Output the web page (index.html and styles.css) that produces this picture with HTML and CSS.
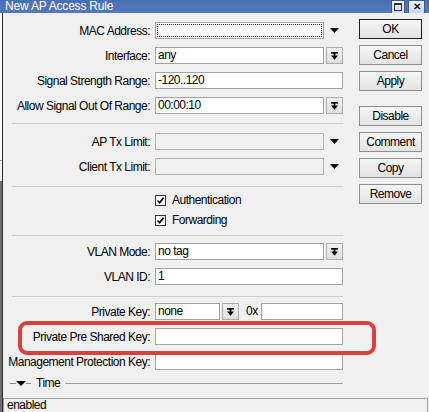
FILE: index.html
```html
<!DOCTYPE html>
<html>
<head>
  <meta charset="utf-8">
  <title>New AP Access Rule</title>
  <link rel="stylesheet" href="styles.css">
</head>
<body>
  <div class="titlebar">
    <span class="title">New AP Access Rule</span>
    <div class="winbtns">
      <span class="wb"><span class="max-box"></span></span>
      <span class="wb close">✕</span>
    </div>
  </div>

  <div class="frame">
    <div class="content">
      <div class="form">

        <div class="section s1">
          <div class="row">
            <span class="lbl">MAC Address:</span>
            <div class="ctl"><span class="input short focus"><span class="focus-rect"></span></span><span class="arrow"><svg width="9" height="5" viewBox="0 0 9 5"><polygon points="0,0 9,0 4.5,5" fill="#000"/></svg></span></div>
          </div>
          <div class="row">
            <span class="lbl">Interface:</span>
            <div class="ctl"><span class="input short">any</span><span class="dropbtn"><svg width="7" height="8" viewBox="0 0 7 8"><rect x="0" y="0" width="7" height="1.6" fill="#000"/><rect x="2.6" y="1" width="1.8" height="3" fill="#000"/><polygon points="0,3.4 7,3.4 3.5,7.8" fill="#000"/></svg></span></div>
          </div>
          <div class="row">
            <span class="lbl">Signal Strength Range:</span>
            <div class="ctl"><span class="input">-120..120</span></div>
          </div>
          <div class="row">
            <span class="lbl">Allow Signal Out Of Range:</span>
            <div class="ctl"><span class="input short">00:00:10</span><span class="dropbtn"><svg width="7" height="8" viewBox="0 0 7 8"><rect x="0" y="0" width="7" height="1.6" fill="#000"/><rect x="2.6" y="1" width="1.8" height="3" fill="#000"/><polygon points="0,3.4 7,3.4 3.5,7.8" fill="#000"/></svg></span></div>
          </div>
        </div>

        <div class="sep sep-a"></div>

        <div class="section s2">
          <div class="row">
            <span class="lbl">AP Tx Limit:</span>
            <div class="ctl"><span class="input short disabled"></span><span class="arrow"><svg width="9" height="5" viewBox="0 0 9 5"><polygon points="0,0 9,0 4.5,5" fill="#000"/></svg></span></div>
          </div>
          <div class="row">
            <span class="lbl">Client Tx Limit:</span>
            <div class="ctl"><span class="input short disabled"></span><span class="arrow"><svg width="9" height="5" viewBox="0 0 9 5"><polygon points="0,0 9,0 4.5,5" fill="#000"/></svg></span></div>
          </div>
        </div>

        <div class="sep sep-b"></div>

        <div class="section s3">
          <div class="check-row">
            <span class="cb"><svg width="9" height="9" viewBox="0 0 9 9"><path d="M1.5 4.5 L3.6 6.8 L7.6 1.8" fill="none" stroke="#000" stroke-width="1.7"/></svg></span>
            <span>Authentication</span>
          </div>
          <div class="check-row">
            <span class="cb"><svg width="9" height="9" viewBox="0 0 9 9"><path d="M1.5 4.5 L3.6 6.8 L7.6 1.8" fill="none" stroke="#000" stroke-width="1.7"/></svg></span>
            <span>Forwarding</span>
          </div>
        </div>

        <div class="sep sep-c"></div>

        <div class="section s4">
          <div class="row">
            <span class="lbl">VLAN Mode:</span>
            <div class="ctl"><span class="input short">no tag</span><span class="dropbtn"><svg width="7" height="8" viewBox="0 0 7 8"><rect x="0" y="0" width="7" height="1.6" fill="#000"/><rect x="2.6" y="1" width="1.8" height="3" fill="#000"/><polygon points="0,3.4 7,3.4 3.5,7.8" fill="#000"/></svg></span></div>
          </div>
          <div class="row">
            <span class="lbl">VLAN ID:</span>
            <div class="ctl"><span class="input">1</span></div>
          </div>
        </div>

        <div class="sep sep-b"></div>

        <div class="section s5">
          <div class="row">
            <span class="lbl">Private Key:</span>
            <div class="ctl">
              <span class="input key">none</span>
              <span class="dropbtn"><svg width="7" height="8" viewBox="0 0 7 8"><rect x="0" y="0" width="7" height="1.6" fill="#000"/><rect x="2.6" y="1" width="1.8" height="3" fill="#000"/><polygon points="0,3.4 7,3.4 3.5,7.8" fill="#000"/></svg></span>
              <span class="hex">0x</span>
              <span class="input"></span>
            </div>
          </div>
          <div class="row">
            <span class="lbl">Private Pre Shared Key:</span>
            <div class="ctl"><span class="input"></span></div>
          </div>
          <div class="row">
            <span class="lbl">Management Protection Key:</span>
            <div class="ctl"><span class="input"></span></div>
          </div>
        </div>

        <div class="timegroup">
          <span class="tick"></span>
          <svg width="10" height="5" viewBox="0 0 10 5"><polygon points="0,0 10,0 5,5" fill="#000"/></svg>
          <span class="tick short-tick"></span>
          <span class="time-label">Time</span>
          <span class="time-line"></span>
        </div>
      </div>

      <div class="buttons">
        <button class="btn default">OK</button>
        <button class="btn">Cancel</button>
        <button class="btn">Apply</button>
        <button class="btn gap">Disable</button>
        <button class="btn">Comment</button>
        <button class="btn">Copy</button>
        <button class="btn">Remove</button>
      </div>
    </div>

    <div class="statusbar">
      <span class="status">enabled</span>
    </div>
  </div>

  <!-- red marker round the pre shared key row -->
  <div class="highlight"></div>
</body>
</html>
```

FILE: styles.css
```css
* {
  margin: 0;
  padding: 0;
  box-sizing: border-box;
}

body {
  width: 429px;
  height: 412px;
  overflow: hidden;
  position: relative;
  font-family: 'Liberation Sans', Arial, sans-serif;
  font-size: 12px;
  letter-spacing: -0.5px;
  color: #000;
  background: linear-gradient(to bottom, #fafafa 0, #fafafa 160px, #9a9a9a 160px, #9a9a9a 161px, #f2f2f2 161px, #f2f2f2 181px, #6f6f6f 181px);
}

/* title bar */
.titlebar {
  height: 13px;
  background: linear-gradient(to bottom, #4a70b4, #5379bb);
  display: flex;
  align-items: flex-end;
  justify-content: space-between;
  overflow: hidden;
}

.title {
  color: #fff;
  line-height: 13px;
  padding-left: 5px;
  letter-spacing: -0.2px;
}

.winbtns {
  display: flex;
  gap: 3px;
  padding-right: 4px;
  align-self: flex-end;
}

.wb {
  width: 14px;
  height: 13px;
  border: 1px solid #3f5a8c;
  border-bottom: none;
  background: linear-gradient(to bottom, #eef2f8, #cdd7e8);
  display: flex;
  align-items: center;
  justify-content: center;
}

.wb.close {
  width: 17px;
  font-size: 10px;
  font-weight: bold;
  color: #1b1b1b;
  letter-spacing: 0;
  line-height: 1;
}

.max-box {
  width: 8px;
  height: 8px;
  border: 1px solid #333;
  border-top-width: 2px;
}

/* window body */
.frame {
  margin-left: 2px;
  border-left: 1px solid #2b2b2b;
  background: #f0f0f0;
  height: 399px;
  display: flex;
  flex-direction: column;
}

.content {
  display: flex;
  height: 385px;
}

.form {
  width: 340px;
}

.section {
  display: flex;
  flex-direction: column;
  gap: 8px;
}

.s1 { padding-top: 9px; }
.s2 { padding-top: 9px; }
.s3 { padding-top: 3px; gap: 0; }
.s4 { padding-top: 7px; }
.s5 { padding-top: 6px; }

.row {
  display: grid;
  grid-template-columns: 148px 188px;
  column-gap: 4px;
  height: 17px;
  align-items: center;
}

.lbl {
  text-align: right;
  white-space: nowrap;
  padding-right: 1px;
}

.ctl {
  display: flex;
  align-items: stretch;
  gap: 2px;
  height: 17px;
}

.input {
  flex: 1;
  border: 1px solid #a3a3a3;
  background: #fff;
  padding: 0 2px;
  line-height: 15px;
  white-space: nowrap;
  overflow: hidden;
}

.input.short {
  flex: 0 0 169px;
}

.input.disabled {
  background: #f0f0f0;
  border-color: #b4b4b4;
}

.input.focus {
  padding: 1px;
}

.focus-rect {
  display: block;
  height: 100%;
  border: 1px dotted #222;
}

.input.key {
  flex: 0 0 65px;
}

.arrow {
  width: 17px;
  display: flex;
  align-items: center;
  justify-content: center;
}

.dropbtn {
  width: 17px;
  border: 1px solid #acacac;
  background: linear-gradient(to bottom, #f3f3f3, #dedede);
  display: flex;
  align-items: center;
  justify-content: center;
}

.hex {
  margin-left: 5px;
  width: 13px;
  line-height: 17px;
}

.sep {
  height: 1px;
  background: #cdcdcd;
  margin-left: 9px;
  width: 331px;
}

.sep-a { margin-top: 9px; }
.sep-b { margin-top: 11px; }
.sep-c { margin-top: 5px; }

.check-row {
  height: 20px;
  display: flex;
  align-items: center;
  padding-left: 152px;
}

.cb {
  width: 11px;
  height: 11px;
  border: 1px solid #333;
  background: #fff;
  display: flex;
  align-items: center;
  justify-content: center;
  margin-right: 6px;
}

/* Time group */
.timegroup {
  display: flex;
  align-items: center;
  height: 14px;
  margin-top: 6px;
  padding-left: 7px;
}

.tick {
  width: 6px;
  height: 1px;
  background: #8c8c8c;
}

.short-tick {
  width: 5px;
}

.time-label {
  margin-left: 5px;
}

.time-line {
  flex: 1;
  height: 1px;
  background: #a0a0a0;
  margin-left: 5px;
}

/* right buttons */
.buttons {
  margin-left: 16px;
  padding-top: 6px;
  display: flex;
  flex-direction: column;
  gap: 6px;
}

.btn {
  width: 63px;
  height: 20px;
  border: 1px solid #8f8f8f;
  background: linear-gradient(to bottom, #f6f6f6, #e3e3e3);
  font-family: 'Liberation Sans', Arial, sans-serif;
  font-size: 12px;
  letter-spacing: -0.5px;
  color: #000;
}

.btn.default {
  border-color: #1e1e1e;
}

.btn.gap {
  margin-top: 9px;
}

/* status bar */
.statusbar {
  border-top: 1px solid #a0a0a0;
  height: 14px;
  margin-right: 1px;
}

.status {
  display: block;
  height: 100%;
  border-left: 1px solid #a0a0a0;
  border-right: 1px solid #a0a0a0;
  padding-left: 3px;
  line-height: 13px;
}

/* red marker */
.highlight {
  position: absolute;
  left: 18px;
  top: 321px;
  width: 358px;
  height: 34px;
  border: 4px solid #d9413b;
  border-radius: 9px;
}
```
